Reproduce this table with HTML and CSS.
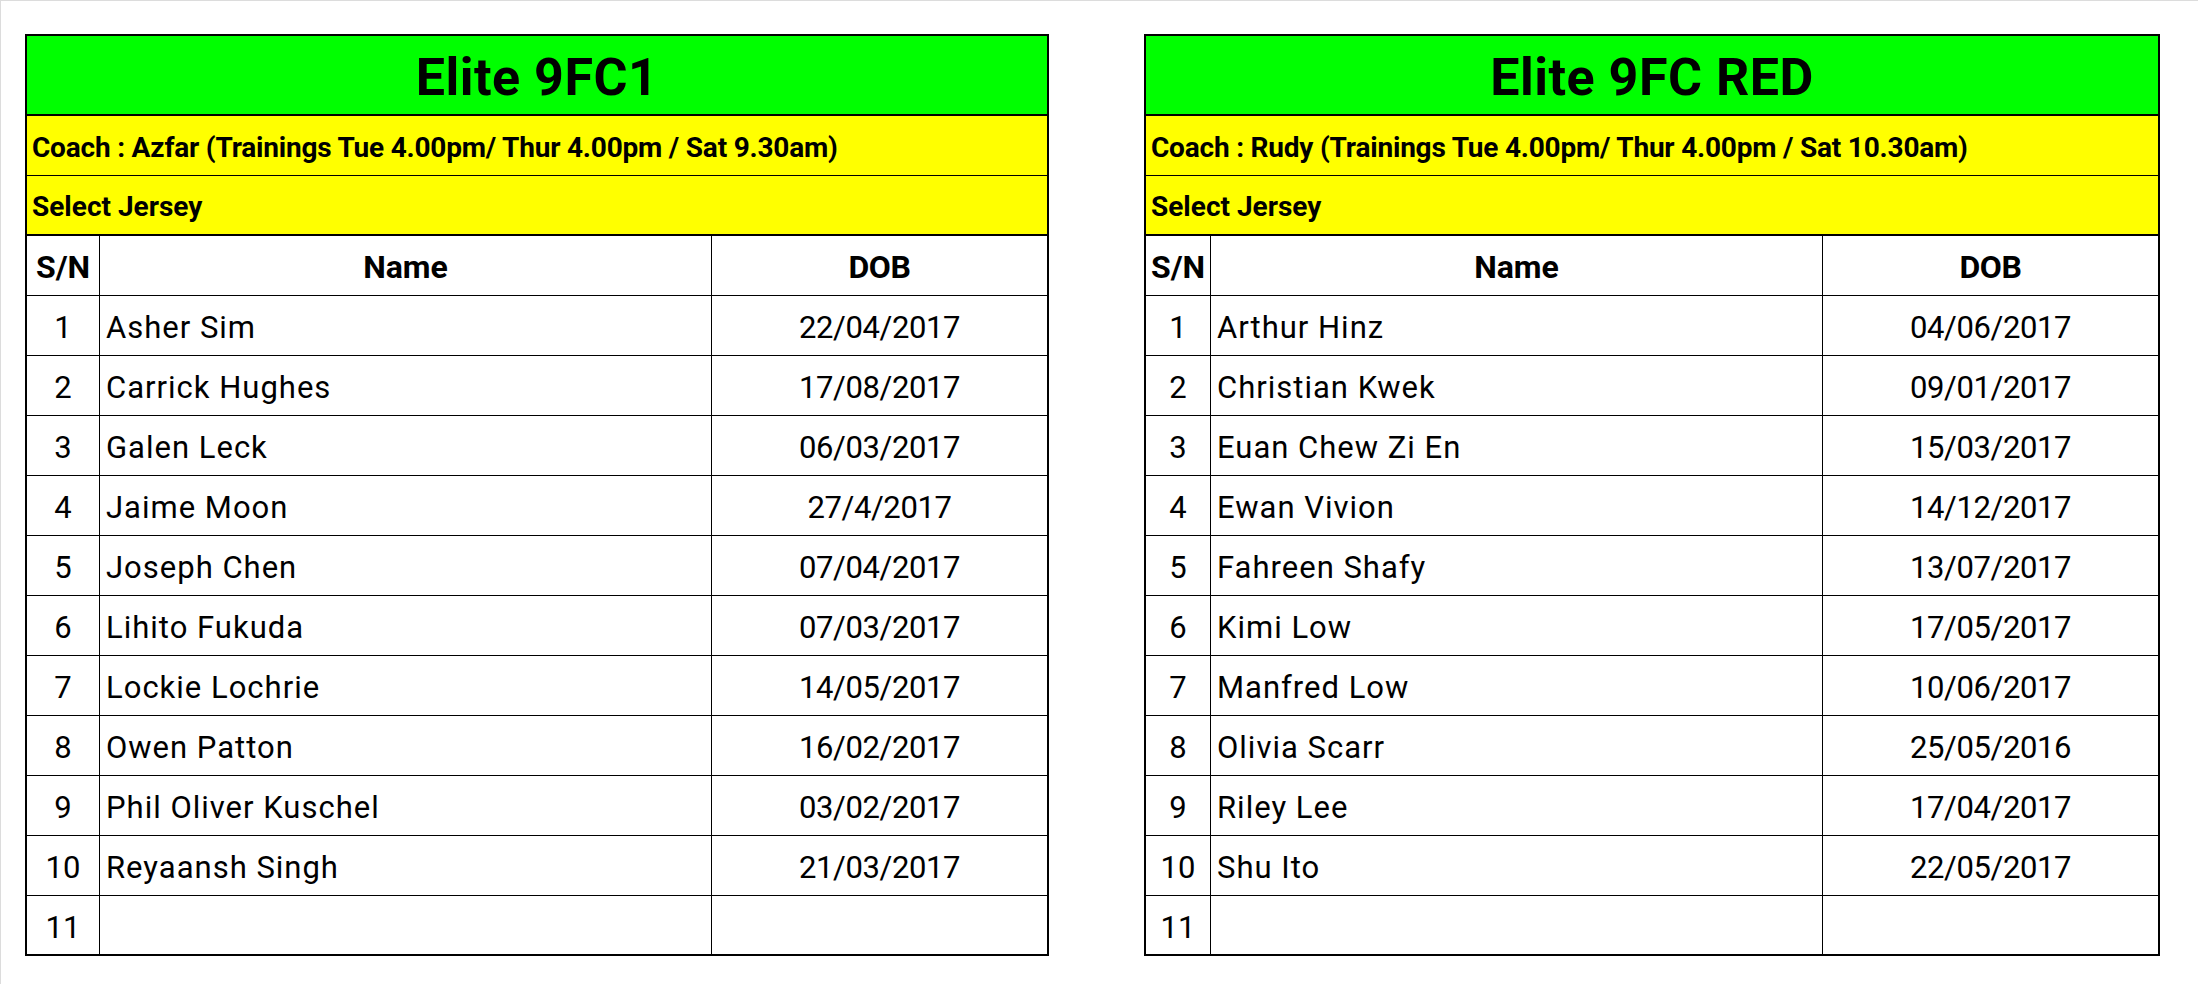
FILE: index.html
```html
<!DOCTYPE html>
<html lang="en">
<head>
<meta charset="utf-8">
<title>Elite 9FC Squads</title>
<link rel="stylesheet" href="styles.css">
</head>
<body>
<div class="page">
  <div class="sheet sheet-left">
    <div class="title">Elite 9FC1</div>
    <div class="info info-coach">Coach : Azfar (Trainings Tue 4.00pm/ Thur 4.00pm / Sat 9.30am)</div>
    <div class="info info-select">Select Jersey</div>
    <div class="row head"><div class="c sn">S/N</div><div class="c nm center">Name</div><div class="c dob">DOB</div></div>
    <div class="row"><div class="c sn">1</div><div class="c nm">Asher Sim</div><div class="c dob">22/04/2017</div></div>
    <div class="row"><div class="c sn">2</div><div class="c nm">Carrick Hughes</div><div class="c dob">17/08/2017</div></div>
    <div class="row"><div class="c sn">3</div><div class="c nm">Galen Leck</div><div class="c dob">06/03/2017</div></div>
    <div class="row"><div class="c sn">4</div><div class="c nm">Jaime Moon</div><div class="c dob">27/4/2017</div></div>
    <div class="row"><div class="c sn">5</div><div class="c nm">Joseph Chen</div><div class="c dob">07/04/2017</div></div>
    <div class="row"><div class="c sn">6</div><div class="c nm">Lihito Fukuda</div><div class="c dob">07/03/2017</div></div>
    <div class="row"><div class="c sn">7</div><div class="c nm">Lockie Lochrie</div><div class="c dob">14/05/2017</div></div>
    <div class="row"><div class="c sn">8</div><div class="c nm">Owen Patton</div><div class="c dob">16/02/2017</div></div>
    <div class="row"><div class="c sn">9</div><div class="c nm">Phil Oliver Kuschel</div><div class="c dob">03/02/2017</div></div>
    <div class="row"><div class="c sn">10</div><div class="c nm">Reyaansh Singh</div><div class="c dob">21/03/2017</div></div>
    <div class="row last"><div class="c sn">11</div><div class="c nm"></div><div class="c dob"></div></div>
  </div>
  <div class="sheet sheet-right">
    <div class="title">Elite 9FC RED</div>
    <div class="info info-coach">Coach : Rudy (Trainings Tue 4.00pm/ Thur 4.00pm / Sat 10.30am)</div>
    <div class="info info-select">Select Jersey</div>
    <div class="row head"><div class="c sn">S/N</div><div class="c nm center">Name</div><div class="c dob">DOB</div></div>
    <div class="row"><div class="c sn">1</div><div class="c nm">Arthur Hinz</div><div class="c dob">04/06/2017</div></div>
    <div class="row"><div class="c sn">2</div><div class="c nm">Christian Kwek</div><div class="c dob">09/01/2017</div></div>
    <div class="row"><div class="c sn">3</div><div class="c nm">Euan Chew Zi En</div><div class="c dob">15/03/2017</div></div>
    <div class="row"><div class="c sn">4</div><div class="c nm">Ewan Vivion</div><div class="c dob">14/12/2017</div></div>
    <div class="row"><div class="c sn">5</div><div class="c nm">Fahreen Shafy</div><div class="c dob">13/07/2017</div></div>
    <div class="row"><div class="c sn">6</div><div class="c nm">Kimi Low</div><div class="c dob">17/05/2017</div></div>
    <div class="row"><div class="c sn">7</div><div class="c nm">Manfred Low</div><div class="c dob">10/06/2017</div></div>
    <div class="row"><div class="c sn">8</div><div class="c nm">Olivia Scarr</div><div class="c dob">25/05/2016</div></div>
    <div class="row"><div class="c sn">9</div><div class="c nm">Riley Lee</div><div class="c dob">17/04/2017</div></div>
    <div class="row"><div class="c sn">10</div><div class="c nm">Shu Ito</div><div class="c dob">22/05/2017</div></div>
    <div class="row last"><div class="c sn">11</div><div class="c nm"></div><div class="c dob"></div></div>
  </div>
</div>
</body>
</html>
```
FILE: styles.css
```css
html, body {
  margin: 0;
  padding: 0;
  background: #ffffff;
}
body {
  font-family: Roboto, "Liberation Sans", sans-serif;
  color: #000000;
}
.page {
  box-sizing: border-box;
  width: 2198px;
  height: 984px;
  border-top: 1px solid #dcdcdc;
  border-left: 1px solid #dcdcdc;
  padding: 33px 0 0 24px;
  display: flex;
  align-items: flex-start;
  gap: 95px;
}
.sheet {
  box-sizing: border-box;
  border: 2px solid #000;
  display: flex;
  flex-direction: column;
}
.sheet-left { width: 1024px; --sn: 73px; }
.sheet-right { width: 1016px; --sn: 65px; }
.title {
  box-sizing: border-box;
  height: 80px;
  padding-top: 4px;
  background: #00ff00;
  border-bottom: 2px solid #000;
  display: flex;
  align-items: center;
  justify-content: center;
  font-weight: 700;
  font-size: 52px;
  letter-spacing: 0.5px;
}
.info {
  box-sizing: border-box;
  height: 60px;
  padding: 3px 0 0 5px;
  background: #ffff00;
  display: flex;
  align-items: center;
  font-weight: 700;
  font-size: 28px;
  white-space: nowrap;
}
.info-coach { border-bottom: 1px solid #000; letter-spacing: -0.2px; }
.info-select { border-bottom: 2px solid #000; }
.row {
  box-sizing: border-box;
  height: 60px;
  border-bottom: 1px solid #000;
  display: grid;
  grid-template-columns: var(--sn) 612px 1fr;
  font-size: 31px;
  letter-spacing: 1px;
}
.row.last { height: 58px; border-bottom: 0; }
.c {
  box-sizing: border-box;
  display: flex;
  align-items: center;
  padding-top: 4px;
  white-space: nowrap;
}
.sn, .nm { border-right: 1px solid #000; }
.sn { justify-content: center; letter-spacing: 0; }
.nm { padding-left: 6px; }
.dob { justify-content: center; letter-spacing: -0.4px; }
.head { font-weight: 700; font-size: 32px; letter-spacing: 0; }
.head .c { padding-top: 3px; }
.head .center { justify-content: center; padding-left: 0; }
```
